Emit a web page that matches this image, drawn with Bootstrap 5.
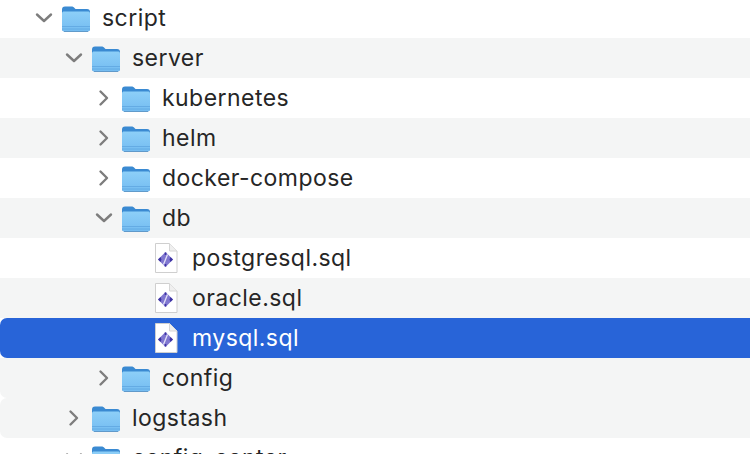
<!DOCTYPE html>
<html lang="en">
<head>
<meta charset="UTF-8">
<title>Finder list</title>
<link rel="stylesheet" href="https://cdn.jsdelivr.net/npm/bootstrap@5.3.0/dist/css/bootstrap.min.css">
<style>
    html, body { height: 454px; overflow: hidden; background: #fff; }
    .tree-list { margin-top: -2px; font-family: Inter, "Liberation Sans", sans-serif; font-size: 23px; letter-spacing: .45px; color: #262626; }
    .tree-row { height: 40px; white-space: nowrap; }
    .tree-row.alt { background: #f4f5f5; }
    .tree-row.sel { background: #2864d8; color: #fff; border-radius: 7px 0 0 7px; }
    .tree-row.last-a { border-bottom-left-radius: 7px; }
    .tree-row.last-b { border-radius: 7px 0 0 7px; }
    .lvl-0 { padding-left: 34px; }
    .lvl-1 { padding-left: 64px; }
    .lvl-2 { padding-left: 94px; }
    .lvl-file { padding-left: 154px; }
    .tw { width: 20px; height: 20px; flex: none; margin-right: 7px; }
    .fld { width: 30px; height: 28px; flex: none; margin-right: 11px; }
    .doc { width: 24px; height: 30px; flex: none; margin-right: 14px; }
</style>
</head>
<body>
<svg width="0" height="0" class="position-absolute">
    <defs>
        <linearGradient id="fb" x1="0" y1="0" x2="0" y2="1">
            <stop offset="0" stop-color="#8dcff8"/>
            <stop offset="1" stop-color="#74bcf1"/>
        </linearGradient>
        <symbol id="folder" viewBox="0 0 30 28">
            <path d="M1 5.500C1 3.500 2 2.500 4 2.500h6.500c1.500 0 2 .5 3 1.500l1 1H26c2 0 3 1 3 3v17c0 1.500-1 2.500-2.500 2.500h-23C2 27.500 1 26.500 1 25z" fill="#3a8ad2"/>
            <path d="M1 9.500C1 8 2 7.500 3 7.500h24c1 0 2 .5 2 2V25c0 1.500-1 2.500-2.500 2.500h-23C2 27.500 1 26.500 1 25z" fill="url(#fb)"/>
            <path d="M1 22.500h28M1 25h28" stroke="#5ea6df" stroke-width=".8"/>
            <path d="M3 27.700h24" stroke="#4c86b8" stroke-width=".8"/>
        </symbol>
        <symbol id="sqlfile" viewBox="0 0 24 30">
            <path d="M1.500 .5H15.500L23 8V29.500H1.500z" fill="#fff" stroke="#cfcfcf"/>
            <path d="M15.500 .5V8H23" fill="#efefef" stroke="#d6d6d6"/>
            <path d="M11.500 9l7.500 7.500-7.500 7.500-7.500-7.500z" fill="#7f76d0"/>
            <path d="M13.500 11.500l-4 10" stroke="#e4e2f6" stroke-width="1.300"/>
            <path d="M4 16.500l2.500-2.500 1 2.500-1 2.500zM19 16.500l-2.500-2.500-1 2.500 1 2.500z" fill="#3f35a4"/>
            <path d="M11.500 9.500v2.500M11.500 21v2.500" stroke="#3f35a4" stroke-width="1.600"/>
        </symbol>
        <symbol id="ch-right" viewBox="0 0 20 20"><path d="M6.500 3.500L13 10l-6.500 6.500" fill="none" stroke="#7d7d7d" stroke-width="2.400" stroke-linecap="round" stroke-linejoin="round"/></symbol>
        <symbol id="ch-down" viewBox="0 0 20 20"><path d="M3 6.500L10 13l7-6.500" fill="none" stroke="#7d7d7d" stroke-width="2.400" stroke-linecap="round" stroke-linejoin="round"/></symbol>
    </defs>
</svg>

<div class="tree-list">
    <div class="tree-row d-flex align-items-center lvl-0"><svg class="tw"><use href="#ch-down"/></svg><svg class="fld"><use href="#folder"/></svg><span>script</span></div>
    <div class="tree-row alt d-flex align-items-center lvl-1"><svg class="tw"><use href="#ch-down"/></svg><svg class="fld"><use href="#folder"/></svg><span>server</span></div>
    <div class="tree-row d-flex align-items-center lvl-2"><svg class="tw"><use href="#ch-right"/></svg><svg class="fld"><use href="#folder"/></svg><span>kubernetes</span></div>
    <div class="tree-row alt d-flex align-items-center lvl-2"><svg class="tw"><use href="#ch-right"/></svg><svg class="fld"><use href="#folder"/></svg><span>helm</span></div>
    <div class="tree-row d-flex align-items-center lvl-2"><svg class="tw"><use href="#ch-right"/></svg><svg class="fld"><use href="#folder"/></svg><span>docker-compose</span></div>
    <div class="tree-row alt d-flex align-items-center lvl-2"><svg class="tw"><use href="#ch-down"/></svg><svg class="fld"><use href="#folder"/></svg><span>db</span></div>
    <div class="tree-row d-flex align-items-center lvl-file"><svg class="doc"><use href="#sqlfile"/></svg><span>postgresql.sql</span></div>
    <div class="tree-row alt d-flex align-items-center lvl-file"><svg class="doc"><use href="#sqlfile"/></svg><span>oracle.sql</span></div>
    <div class="tree-row sel d-flex align-items-center lvl-file"><svg class="doc"><use href="#sqlfile"/></svg><span>mysql.sql</span></div>
    <div class="tree-row alt last-a d-flex align-items-center lvl-2"><svg class="tw"><use href="#ch-right"/></svg><svg class="fld"><use href="#folder"/></svg><span>config</span></div>
    <div class="tree-row alt last-b d-flex align-items-center lvl-1"><svg class="tw"><use href="#ch-right"/></svg><svg class="fld"><use href="#folder"/></svg><span>logstash</span></div>
    <div class="tree-row d-flex align-items-center lvl-1"><svg class="tw"><use href="#ch-down"/></svg><svg class="fld"><use href="#folder"/></svg><span>config-center</span></div>
</div>
</body>
</html>
